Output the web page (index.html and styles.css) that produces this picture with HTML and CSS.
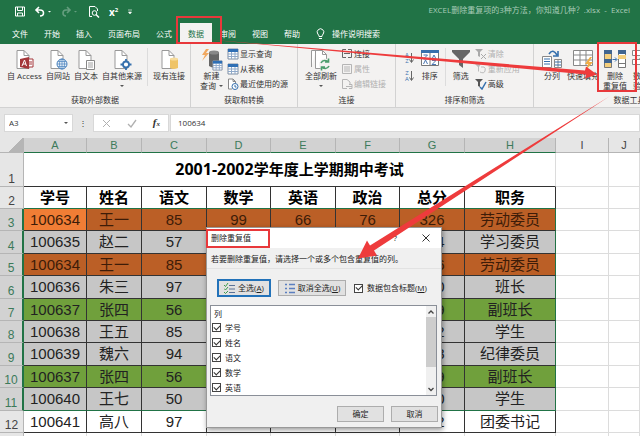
FILE: index.html
```
<!DOCTYPE html>
<html lang="zh-CN">
<head>
  <meta charset="utf-8" />
  <title>EXCEL删除重复项的3种方法，你知道几种？.xlsx - Excel</title>
  <meta name="viewport" content="width=device-width, initial-scale=1">
  <link rel="stylesheet" href="styles.css">
</head>
<body>
  <svg class="defs" width="0" height="0">
    <defs>
      <symbol id="page" viewBox="0 0 20 22">
        <path d="M3 1.5h7l5 5v13H3z" fill="#fff" stroke="#999"/>
        <path d="M10 1.5v5h5" fill="none" stroke="#999"/>
      </symbol>
      <symbol id="table" viewBox="0 0 12 12">
        <path d="M1 1h10v10H1z" fill="#fff" stroke="#7f8ea3"/>
        <path d="M1 6h10M1 8.500h10M4.500 4v7M8 4v7" stroke="#8fa9c9"/>
        <path d="M1 1h10v3H1z" fill="#2f6fb5"/>
      </symbol>
    </defs>
  </svg>

  <header class="top">
    <div class="title-bar">
      <div class="quick">
        <button aria-label="保存"><svg width="10" height="11" viewBox="0 0 10 11"><path d="M.5 1h9v9h-9zM2.500 1v3.500h5V1M2.500 10V7h5v3" fill="none" stroke="#fff"/></svg></button>
        <button aria-label="撤消"><svg width="18" height="11" viewBox="0 0 18 11"><path d="M2 4h4q3.500 0 3.500 3T6 10M5 1L2 4l3 3" fill="none" stroke="#fff" stroke-width="1.600"/><path d="M14 5h3l-1.500 1.500z" fill="#fff"/></svg></button>
        <button class="faded" aria-label="恢复"><svg width="18" height="11" viewBox="0 0 18 11"><path d="M9 4H5Q2 4 2 7t3 3M6 1l3 3-3 3" fill="none" stroke="#fff" stroke-width="1.600"/><path d="M13 5h3l-1.500 1.500z" fill="#fff"/></svg></button>
        <button aria-label="打印预览"><svg width="12" height="12" viewBox="0 0 12 12"><path d="M4 10.500H1.500v-10H7l2.500 2.500v2" fill="none" stroke="#fff"/><circle cx="6.500" cy="7" r="2.300" fill="none" stroke="#fff"/><path d="M8 8.500l3 3" stroke="#fff" stroke-width="1.500"/></svg></button>
        <button class="sup" aria-label="上标">x<sup>2</sup></button>
        <button aria-label="自定义"><svg width="6" height="6" viewBox="0 0 6 6"><path d="M1 1h4M1.500 3h3L3 5z" stroke="#fff" stroke-width=".6" fill="#fff"/></svg></button>
      </div>
      <span class="doc">EXCEL删除重复项的3种方法，你知道几种？.xlsx&nbsp; -&nbsp; Excel</span>
    </div>
    <nav class="tabs">
      <a href="#">文件</a>
      <a href="#">开始</a>
      <a href="#">插入</a>
      <a href="#">页面布局</a>
      <a href="#">公式</a>
      <a href="#" class="active">数据</a>
      <a href="#">审阅</a>
      <a href="#">视图</a>
      <a href="#">帮助</a>
      <a href="#" class="tell"><svg width="9" height="12" viewBox="0 0 9 12"><path d="M3 8.500Q3 7 1.800 6A3.300 3.300 0 1 1 7.200 6Q6 7 6 8.500zM3 10.500h3" fill="none" stroke="#fff"/></svg>操作说明搜索</a>
    </nav>
  </header>

  <section class="ribbon">
    <div class="group external">
      <div class="tools">
        <button class="big"><svg width="20" height="22"><use href="#page"/><path d="M6 10l9-2v12l-9-2z" fill="#a4373a"/><path d="M15 10h4v8h-4M15 13h3M15 15h3" fill="#fff" stroke="#a4373a"/><path d="M8 17l2.500-6 2 6M9 15h3" fill="none" stroke="#fff"/></svg>自 Access</button>
        <button class="big"><svg width="20" height="22"><use href="#page"/><circle cx="14" cy="15" r="5" fill="#e7f0f8" stroke="#4a82bd"/><path d="M9 15h10M14 10v10M10 12.500h8M10 17.500h8" stroke="#4a82bd" stroke-width=".7"/><ellipse cx="14" cy="15" rx="2.500" ry="5" fill="none" stroke="#4a82bd" stroke-width=".7"/></svg>自网站</button>
        <button class="big"><svg width="20" height="22"><use href="#page"/><path d="M10.500 11.500h8v9h-8z" fill="#fff" stroke="#888"/><path d="M12 14h5M12 16h5M12 18h5" stroke="#888" stroke-width=".8"/></svg>自文本</button>
        <button class="big"><svg width="20" height="22"><use href="#page"/><circle cx="14" cy="15.500" r="3" fill="#fff" stroke="#3670ad" stroke-width="1.800"/><path d="M14 10v3M14 18v3M8.500 15.500h3M16.500 15.500h3" stroke="#3670ad" stroke-width="1.800"/></svg>自其他来源<i class="caret"></i></button>
        <span class="rule"></span>
        <button class="big"><svg width="20" height="22"><use href="#page"/><path d="M11 10v9q3.500 2 8 0v-9z" fill="#efc468"/><ellipse cx="15" cy="10" rx="4" ry="1.500" fill="#f7dc9c"/></svg>现有连接</button>
      </div>
      <h2>获取外部数据</h2>
    </div>

    <div class="group transform">
      <div class="tools">
        <button class="big"><svg width="22" height="22" viewBox="0 0 22 22"><path d="M8 3v14q5 3 10 0V3z" fill="#666"/><ellipse cx="13" cy="3.500" rx="5" ry="2" fill="#888"/><path d="M5 0L1 6h3l-3 6 7-8H5l3-4z" fill="#f0a860"/><svg x="11" y="11" width="11" height="11"><use href="#table"/></svg></svg>新建<span>查询<i class="caret inline"></i></span></button>
        <div class="stack">
          <button><svg width="12" height="12"><use href="#table"/></svg>显示查询</button>
          <button><svg width="12" height="12"><use href="#table"/></svg>从表格</button>
          <button><svg width="12" height="12" viewBox="0 0 12 12"><path d="M5 11H1.500V1H6l2.500 2.500V5M6 1v2.500h2.500" fill="#fff" stroke="#888"/><circle cx="8" cy="8.500" r="3" fill="#fff" stroke="#3670ad"/><path d="M8 7v2h1.500" fill="none" stroke="#3670ad"/></svg>最近使用的源</button>
        </div>
      </div>
      <h2>获取和转换</h2>
    </div>

    <div class="group links">
      <div class="tools">
        <button class="big"><svg width="22" height="22" viewBox="0 0 22 22"><path d="M1.500 18V1.500H6M5.500 19.500v-18h7l4 4v14z" fill="#fff" stroke="#999"/><path d="M12.500 1.500v4h4" fill="none" stroke="#999"/><circle cx="15" cy="15.500" r="6" fill="#f3f2f1"/><path d="M11 14q2-4 7-1.500M19 17q-2 4-7 1.500M18.500 9.500v3.500H15M11.500 21.500V18H15" fill="none" stroke="#4a9c6c" stroke-width="1.600"/></svg>全部刷新<i class="caret"></i></button>
        <div class="stack">
          <button><svg width="12" height="12" viewBox="0 0 12 12"><path d="M5 1.500H1.500v8H5M7 1.500h3.500v8H7M3 5.500h6" fill="none" stroke="#666"/></svg>连接</button>
          <button disabled><svg width="12" height="12" viewBox="0 0 12 12"><path d="M1.500 1.500h9v9h-9zM3 4h6M3 6h6M3 8h6" fill="none" stroke="#b5b5b5"/></svg>属性</button>
          <button disabled><svg width="12" height="12" viewBox="0 0 12 12"><path d="M6 10.500H1.500v-9H6L9 4v3M5 8.500h6M8 6.500h3v4H8" fill="none" stroke="#b5b5b5"/></svg>编辑链接</button>
        </div>
      </div>
      <h2>连接</h2>
    </div>

    <div class="group sorting">
      <div class="tools">
        <div class="az">
          <button aria-label="升序"><span>A<br>Z</span><svg width="5" height="12" viewBox="0 0 5 12"><path d="M2.500 1v9M.5 7.500l2 3 2-3" fill="none" stroke="#666"/></svg></button>
          <button aria-label="降序"><span>Z<br>A</span><svg width="5" height="12" viewBox="0 0 5 12"><path d="M2.500 1v9M.5 7.500l2 3 2-3" fill="none" stroke="#666"/></svg></button>
        </div>
        <button class="big"><svg width="20" height="22" viewBox="0 0 20 22"><path d="M1.500 1.500h17v15h-17zM10 1.500v15" fill="#fff" stroke="#777"/><path d="M1 1h18v3H1z" fill="#3670ad"/><path d="M3.500 6h4l-4 4h4M3.500 15l2-4 2 4M12 10l2-4 2 4M12 11.500h4l-4 4h4" fill="none" stroke="#4a76b0"/></svg>排序</button>
        <span class="rule"></span>
        <button class="big"><svg width="20" height="22" viewBox="0 0 20 22"><path d="M1 1h18v2l-7 7v9l-4-3v-6L1 3z" fill="#666"/></svg>筛选</button>
        <div class="stack">
          <button disabled><svg width="12" height="12" viewBox="0 0 12 12"><path d="M0 1h8L5 4v5L3 8V4z" fill="#aaa"/><path d="M6 6l5 5M11 6l-5 5" stroke="#aaa"/></svg>清除</button>
          <button disabled><svg width="12" height="12" viewBox="0 0 12 12"><path d="M0 1h6L4 4v5L3 8V4z" fill="#bbb"/><path d="M6 4h3q2 1 1 4t-5 1" fill="none" stroke="#bbb"/></svg>重新应用</button>
          <button><svg width="12" height="12" viewBox="0 0 12 12"><path d="M0 1h8L5 4v5L3 8V4z" fill="#555"/><path d="M5 9l2 2 4-7" fill="none" stroke="#3670ad" stroke-width="1.500"/></svg>高级</button>
        </div>
      </div>
      <h2>排序和筛选</h2>
    </div>

    <div class="group data-tools">
      <div class="tools">
        <button class="big"><svg width="22" height="22" viewBox="0 0 22 22"><path d="M1.500 7.500h9v11h-9zM13.500 10.500h7v8h-7zM17 10.500v8" fill="#fff" stroke="#888"/><path d="M3 10h6M3 12.500h6M3 15h6M14 13h6M14 16h6" stroke="#3670ad"/><path d="M8 5q4-6 8 1M17 2v5h-5" fill="none" stroke="#3670ad" stroke-width="1.600"/></svg>分列</button>
        <button class="big"><svg width="22" height="22" viewBox="0 0 22 22"><path d="M1.500 1.500h19v15h-19zM1 6h20M1 11h20M8 1v15M14 1v15" fill="#fff" stroke="#888"/><path d="M18 8l-5 7h3l-2 6 7-8h-4l3-5z" fill="#f0ae45"/></svg>快速填充</button>
        <button class="big"><svg width="22" height="22" viewBox="0 0 22 22"><path d="M.5 1.500h7v17h-7z" fill="#f5cf7c" stroke="#777"/><path d="M0 1h8v4H0zM0 10h8v4H0z" fill="#41658f"/><path d="M14.500 1.500h7v17h-7z" fill="#fff" stroke="#777"/><path d="M14 1h8v4h-8z" fill="#41658f"/><path d="M14 6h8v4h-8z" fill="#f5cf7c"/><path d="M14 14.500h8" stroke="#777"/><path d="M8.500 10.500h4M11 8.500l2 2-2 2" fill="none" stroke="#3670ad"/></svg>删除<span>重复值</span></button>
        <button class="big"><svg width="20" height="22" viewBox="0 0 20 22"><path d="M1.500 1.500h12v5h-12zM1.500 10.500h12v5h-12z" fill="#fff" stroke="#888"/><path d="M9 9l3 3 5-6" fill="none" stroke="#4a9c6c" stroke-width="2"/></svg>数据<span>验证</span></button>
      </div>
      <h2>数据工具</h2>
    </div>
  </section>

  <section class="formula">
    <label class="name-box"><input type="text" value="A3" aria-label="名称框"><i class="caret"></i></label>
    <span class="dots">⋮</span>
    <div class="fx">
      <button aria-label="取消输入"><svg width="9" height="9" viewBox="0 0 9 9"><path d="M1 1l7 7M8 1L1 8" stroke="#b0b0b0"/></svg></button>
      <button aria-label="输入"><svg width="10" height="9" viewBox="0 0 10 9"><path d="M1 5l3 3 5-7" fill="none" stroke="#b0b0b0" stroke-width="1.300"/></svg></button>
      <button aria-label="插入函数"><em>f<small>x</small></em></button>
    </div>
    <input class="value" type="text" value="100634" aria-label="编辑栏">
  </section>

  <main class="sheet">
    <table>
      <colgroup>
        <col class="num"><col class="c-a"><col class="c-b"><col class="c-c"><col class="c-d"><col class="c-c"><col class="c-d"><col class="c-c"><col class="c-h"><col class="c-i"><col>
      </colgroup>
      <thead>
        <tr><th class="corner"></th><th>A</th><th>B</th><th>C</th><th>D</th><th>E</th><th>F</th><th>G</th><th>H</th><th class="off">I</th><th class="off">J</th></tr>
      </thead>
      <tbody>
        <tr class="caption"><th>1</th><td colspan="8"><span>2001-2002</span>学年度上学期期中考试</td><td></td><td></td></tr>
        <tr class="fields"><th>2</th><td>学号</td><td>姓名</td><td>语文</td><td>数学</td><td>英语</td><td>政治</td><td>总分</td><td>职务</td><td></td><td></td></tr>
        <tr class="sel orange"><th>3</th><td class="current">100634</td><td>王一</td><td>85</td><td>99</td><td>66</td><td>76</td><td>326</td><td>劳动委员</td><td></td><td></td></tr>
        <tr class="sel"><th>4</th><td>100635</td><td>赵二</td><td>57</td><td>73</td><td>62</td><td>92</td><td>284</td><td>学习委员</td><td></td><td></td></tr>
        <tr class="sel orange"><th>5</th><td>100634</td><td>王一</td><td>85</td><td>99</td><td>66</td><td>76</td><td>326</td><td>劳动委员</td><td></td><td></td></tr>
        <tr class="sel"><th>6</th><td>100636</td><td>朱三</td><td>97</td><td>80</td><td>79</td><td>84</td><td>340</td><td>班长</td><td></td><td></td></tr>
        <tr class="sel green"><th>7</th><td>100637</td><td>张四</td><td>56</td><td>82</td><td>75</td><td>86</td><td>299</td><td>副班长</td><td></td><td></td></tr>
        <tr class="sel"><th>8</th><td>100638</td><td>王五</td><td>85</td><td>88</td><td>51</td><td>68</td><td>292</td><td>学生</td><td></td><td></td></tr>
        <tr class="sel"><th>9</th><td>100639</td><td>魏六</td><td>94</td><td>73</td><td>93</td><td>88</td><td>348</td><td>纪律委员</td><td></td><td></td></tr>
        <tr class="sel green"><th>10</th><td>100637</td><td>张四</td><td>56</td><td>82</td><td>75</td><td>86</td><td>299</td><td>副班长</td><td></td><td></td></tr>
        <tr class="sel last"><th>11</th><td>100640</td><td>王七</td><td>50</td><td>81</td><td>69</td><td>80</td><td>280</td><td>学生</td><td></td><td></td></tr>
        <tr><th>12</th><td>100641</td><td>高八</td><td>97</td><td>76</td><td>65</td><td>94</td><td>332</td><td>团委书记</td><td></td><td></td></tr>
        <tr class="blank"><th></th><td></td><td></td><td></td><td></td><td></td><td></td><td></td><td></td><td></td><td></td></tr>
      </tbody>
    </table>
  </main>

  <form class="dialog" role="dialog" aria-label="删除重复值">
    <div class="dialog-title">
      <span>删除重复值</span>
      <button type="button" aria-label="帮助">?</button>
      <button type="button" aria-label="关闭"><svg width="8" height="8" viewBox="0 0 8 8"><path d="M.5.5l7 7M7.500.5l-7 7" stroke="#333"/></svg></button>
    </div>
    <p>若要删除重复值，请选择一个或多个包含重复值的列。</p>
    <div class="options">
      <button type="button" class="focus"><svg width="12" height="11" viewBox="0 0 12 11"><path d="M0 2l1.500 1.500L4 0M0 5.500L1.500 7 4 4M0 9l1.500 1.500L4 8" fill="none" stroke="#3d9a4d"/><path d="M5 2.500h6M5 6h6M5 9.500h6" stroke="#5b7296"/></svg><span>全选(<u>A</u>)</span></button>
      <button type="button"><svg width="12" height="11" viewBox="0 0 12 11"><path d="M1 1.500h2M1 5.500h2M1 9.500h2M5 1.500h6M5 5.500h6M5 9.500h6" stroke="#5b7fc0" stroke-width="1.500"/></svg><span>取消全选(<u>U</u>)</span></button>
      <label><input type="checkbox" checked><span>数据包含标题(<u>M</u>)</span></label>
    </div>
    <div class="list">
      <div class="columns">
        <b>列</b>
        <label><input type="checkbox" checked>学号</label>
        <label><input type="checkbox" checked>姓名</label>
        <label><input type="checkbox" checked>语文</label>
        <label><input type="checkbox" checked>数学</label>
        <label><input type="checkbox" checked>英语</label>
      </div>
      <div class="scroll">
        <svg width="10" height="10" viewBox="0 0 10 10"><path d="M2.500 6.500L5 4l2.500 2.500" fill="none" stroke="#444" stroke-width="1.300"/></svg>
        <span class="thumb"></span>
        <svg width="10" height="10" viewBox="0 0 10 10"><path d="M2.500 4L5 6.500 7.500 4" fill="none" stroke="#444" stroke-width="1.300"/></svg>
      </div>
    </div>
    <div class="actions">
      <button type="button">确定</button>
      <button type="button">取消</button>
    </div>
  </form>

  <!-- 标注: 红框和箭头 -->
  <svg class="marks" width="640" height="436" viewBox="0 0 640 436">
    <g fill="none" stroke="#e8383b" stroke-width="2">
      <path d="M177 17h44v26h-44z"/>
      <path d="M598 43h38v48h-38z"/>
      <path d="M207 230h62v17h-62z"/>
    </g>
    <g fill="#ee3b3c">
      <path d="M208 39.500L585 70.500l1-4 11 8-12 4 1-4z"/>
      <path d="M610 96L370 245.500l-3-5-9 18 19-3-3-5z"/>
    </g>
  </svg>
</body>
</html>
```

FILE: styles.css
```
* {
  box-sizing: border-box;
}
html, body {
  margin: 0;
  height: 100%;
  overflow: hidden;
}
body {
  position: relative;
  background: #e6e6e6;
  color: #333;
  font: 8px/12px "Open Sans", "Noto Sans CJK SC", sans-serif;
}
button, input {
  margin: 0;
  padding: 0;
  border: 0;
  background: none;
  color: inherit;
  font: inherit;
}
svg {
  flex: none;
}
.defs, .marks {
  position: absolute;
  top: 0;
  left: 0;
  pointer-events: none;
}
.caret {
  border: 2px solid transparent;
  border-top-color: #555;
  border-bottom: 0;
}

/* title bar + tabs */
.top {
  background: #217346;
  color: #fff;
}
.title-bar {
  display: flex;
  justify-content: space-between;
  align-items: center;
  height: 23px;
  padding: 0 10px 0 15px;
}
.quick {
  display: flex;
  align-items: center;
  gap: 9px;
}
.quick button {
  display: flex;
}
.quick .faded {
  opacity: .3;
}
.quick .sup {
  font-size: 10px;
  font-weight: bold;
}
.quick sup {
  font-size: 6px;
  line-height: 8px;
}
.doc {
  color: #a9cbb8;
  line-height: 20px;
  align-self: flex-start;
}
.tabs {
  display: flex;
  height: 21px;
  padding-left: 4px;
}
.tabs a {
  display: flex;
  align-items: center;
  padding: 0 8px;
  color: #fff;
  text-decoration: none;
  white-space: nowrap;
}
.tabs .active {
  background: #f3f2f1;
  color: #217346;
}
.tabs .tell {
  gap: 7px;
}

/* ribbon */
.ribbon {
  display: flex;
  height: 64px;
  background: #f3f2f1;
  border-bottom: 1px solid #d2d2d2;
  overflow: hidden;
}
.group {
  display: flex;
  flex: none;
  flex-direction: column;
  justify-content: space-between;
  padding: 4px 0 2px;
  border-right: 1px solid #d2d2d2;
}
.group h2 {
  margin: 0;
  font-size: 8px;
  font-weight: normal;
  line-height: 10px;
  text-align: center;
}
.tools {
  display: flex;
  align-items: flex-start;
}
.external {
  width: 191px;
}
.transform {
  width: 107px;
}
.links {
  width: 98px;
}
.sorting {
  width: 138px;
}
.data-tools {
  width: 192px;
}
.external .tools, .links .tools, .data-tools .tools {
  padding-left: 5px;
}
.transform .tools {
  padding-left: 7px;
}
.big {
  display: flex;
  flex: none;
  flex-direction: column;
  align-items: center;
  padding: 1px 2px 0;
  line-height: 10px;
  white-space: nowrap;
}
.big .caret {
  margin-top: 4px;
}
.big .inline {
  display: inline-block;
  margin: 0 0 2px 3px;
}
.rule {
  width: 1px;
  height: 38px;
  margin: 0 3px;
  background: #dcdcdc;
}
.stack {
  display: flex;
  flex-direction: column;
  gap: 3px;
  padding-left: 2px;
}
.stack button {
  display: flex;
  align-items: center;
  gap: 1px;
  white-space: nowrap;
}
.stack button:disabled {
  color: #b0b0b0;
}
.az {
  display: flex;
  flex-direction: column;
  gap: 6px;
  padding: 4px 4px 0 9px;
}
.az button {
  display: flex;
  color: #3670ad;
  font-size: 6px;
  line-height: 6px;
}

/* formula bar */
.formula {
  display: flex;
  gap: 1px;
  height: 30px;
  padding: 6px 0 6px 4px;
  background: #e6e6e6;
}
.name-box, .fx, .value {
  background: #fff;
  border: 1px solid #d8d8d8;
}
.name-box {
  display: flex;
  align-items: center;
  width: 69px;
  padding: 0 4px;
}
.name-box input {
  flex: 1;
  min-width: 0;
}
.dots {
  width: 18px;
  text-align: center;
  line-height: 18px;
}
.fx {
  display: flex;
  align-items: center;
  justify-content: space-around;
  width: 76px;
}
.fx button {
  display: flex;
}
.fx em {
  font: italic bold 11px/12px "Liberation Serif", serif;
}
.fx small {
  font-size: 7px;
}
.value {
  flex: 1;
  min-width: 0;
  padding-left: 7px;
}

/* grid */
.sheet {
  background: #fff;
}
table {
  width: 100%;
  table-layout: fixed;
  border-collapse: separate;
  border-spacing: 0;
  color: #222;
  font: 15px/20px "Liberation Sans", "Noto Sans CJK SC", sans-serif;
}
.num { width: 24px; }
.c-a { width: 63px; }
.c-b { width: 55px; }
.c-c { width: 65px; }
.c-d { width: 64px; }
.c-h { width: 91px; }
.c-i { width: 53px; }
th, td {
  height: 22px;
  padding: 0;
  border-right: 1px solid #333;
  border-bottom: 1px solid #333;
  text-align: center;
  white-space: nowrap;
  overflow: hidden;
}
tbody tr:nth-child(4) > *,
tbody tr:nth-child(6) > *,
tbody tr:nth-child(9) > *,
tbody tr:nth-child(11) > * {
  height: 23px;
}
thead th {
  height: 15px;
  background: #d2d2d2;
  border-right-color: #b5b5b5;
  border-bottom-color: #217346;
  color: #3c7a5a;
  font-size: 11px;
  font-weight: normal;
  line-height: 14px;
}
thead .off, thead .corner {
  background: #e6e6e6;
  border-bottom-color: #b5b5b5;
  color: #444;
}
thead .corner {
  background: linear-gradient(135deg, #e6e6e6 60%, #b5b5b5 60%);
}
tbody th {
  background: #e6e6e6;
  border-color: #b5b5b5;
  color: #444;
  font-size: 12px;
  font-weight: normal;
  line-height: 13px;
  vertical-align: bottom;
}
td:nth-last-child(-n+2) {
  border-color: #dcdcdc;
}
.caption > * {
  height: 34px;
}
.caption td {
  font-weight: bold;
  color: #000;
}
.caption span {
  font: bold 16px/20px "Noto Sans", sans-serif;
}
.caption td:nth-child(2) {
  border-right-color: #dcdcdc;
}
.fields td {
  font-weight: bold;
  color: #000;
  border-bottom-color: #217346;
}
.fields td:nth-last-child(-n+2) {
  border-bottom-color: #dcdcdc;
}
.sel th {
  background: #d2d2d2;
  border-right: 2px solid #217346;
  color: #3c7a5a;
}
.sel td:nth-child(-n+9) {
  background: #c6c6c6;
}
.sel td:nth-child(9) {
  border-right-color: #217346;
}
.sel.orange td:nth-child(-n+9) {
  background: #bb5f26;
  color: #3d1c08;
}
.sel.orange td.current {
  background: #f07d35;
}
.sel.green td:nth-child(-n+9) {
  background: #70a03c;
}
.last td:nth-child(-n+9) {
  border-bottom-color: #217346;
}
.blank > * {
  border-bottom: 0;
}
.blank td {
  border-right-color: #dcdcdc;
}

/* dialog */
.dialog {
  position: absolute;
  top: 227px;
  left: 206px;
  width: 236px;
  background: #f0f0f0;
  border: 1px solid #999;
  box-shadow: 1px 2px 5px rgba(0, 0, 0, .4);
  color: #222;
}
.dialog-title {
  display: flex;
  align-items: center;
  gap: 25px;
  height: 20px;
  padding: 0 11px 0 4px;
  background: #fff;
}
.dialog-title span {
  flex: 1;
}
.dialog-title button {
  display: flex;
}
.dialog p {
  margin: 0;
  padding: 5px 4px 3px;
  border-bottom: 1px solid #e2e2e2;
  white-space: nowrap;
}
.options {
  display: flex;
  align-items: center;
  gap: 8px;
  height: 36px;
  padding: 2px 8px 0 11px;
  white-space: nowrap;
}
.options button, .actions button {
  display: flex;
  align-items: center;
  justify-content: center;
  gap: 2px;
  height: 16px;
  background: #e1e1e1;
  border: 1px solid #adadad;
}
.options button {
  width: 68px;
}
.options .focus {
  width: 52px;
  border: 1px solid #2272b9;
  outline: 1px solid #2272b9;
}
.dialog label {
  display: flex;
  align-items: center;
  gap: 4px;
}
.dialog input {
  appearance: none;
  display: flex;
  align-items: center;
  justify-content: center;
  width: 9px;
  height: 9px;
  background: #fff;
  border: 1px solid #444;
}
.dialog input:checked::before {
  content: "";
  width: 3px;
  height: 5px;
  margin-bottom: 2px;
  border: solid #333;
  border-width: 0 1px 1px 0;
  transform: rotate(45deg);
}
.list {
  display: flex;
  margin: 0 4px 0 3px;
  background: #fff;
  border: 1px solid #8a8f98;
}
.columns {
  flex: 1;
  padding: 1px 1px 0;
}
.columns b {
  display: block;
  padding: 1px 2px 0;
  font-weight: normal;
}
.columns label {
  height: 15px;
}
.scroll {
  display: flex;
  flex-direction: column;
  width: 10px;
  background: #f0f0f0;
  padding: 1px 0;
}
.thumb {
  height: 50px;
  margin-bottom: auto;
  background: #cdcdcd;
}
.actions {
  display: flex;
  justify-content: flex-end;
  gap: 7px;
  padding: 10px 3px 5px;
}
.actions button {
  width: 47px;
}
```
